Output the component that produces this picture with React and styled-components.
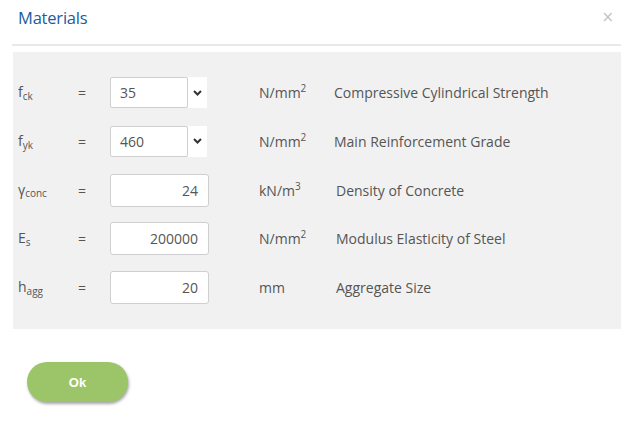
import React from "react";
import styled, { createGlobalStyle } from "styled-components";

const Global = createGlobalStyle`
  html, body { margin: 0; padding: 0; background: #fff; }
  body { font-family: "Open Sans", "Noto Sans", sans-serif; color: #555; }
`;

const Modal = styled.div`
  width: 634px;
  height: 427px;
  box-sizing: border-box;
  padding: 0 13px 0 12px;
  display: flex;
  flex-direction: column;
`;

const Header = styled.div`
  height: 46px;
  display: flex;
  align-items: center;
  justify-content: space-between;
  padding: 0 7px 9px 6px;
  box-sizing: border-box;
  border-bottom: 2px solid #e9e9e9;
`;

const Title = styled.h4`
  margin: 0;
  font-size: 16.5px;
  font-weight: 400;
  color: #1b5c9e;
  letter-spacing: -0.2px;
`;

const Close = styled.span`
  font-family: "DejaVu Sans", sans-serif;
  font-size: 15px;
  color: #c4c4c4;
  line-height: 1;
`;

const Panel = styled.div`
  margin: 6px 0 0 1px;
  background: #f1f1f1;
  padding: 24px 0 25px 5px;
  display: grid;
  grid-template-columns: 60px 32px 149px 75px 1fr;
  grid-auto-rows: 33px;
  row-gap: 15.75px;
  align-items: center;
  font-size: 14px;
  color: #555;
`;

const Label = styled.div`
  white-space: nowrap;
  sub {
    font-size: 10px;
    vertical-align: ${(p) => (p.$low ? "-2px" : "-3px")};
  }
`;

const Eq = styled.div``;

const InputBox = styled.div`
  width: 99px;
  height: 33px;
  box-sizing: border-box;
  background: #fff;
  border: 1px solid #cfcfcf;
  border-radius: 3px;
  display: flex;
  align-items: center;
  justify-content: ${(p) => (p.$left ? "flex-start" : "flex-end")};
  padding: 0 10px;
  font-size: 14px;
  color: #555;
`;

const SelectWrap = styled.div`
  display: flex;
  height: 31px;
  width: 97px;
`;

const SelectField = styled(InputBox)`
  width: 78px;
  height: 31px;
  border-radius: 2px;
  padding: 0 9px;
`;

const Arrow = styled.div`
  width: 19px;
  background: #fff;
  display: flex;
  align-items: center;
  justify-content: center;
`;

const Unit = styled.div`
  white-space: nowrap;
  sup {
    font-size: 10px;
    vertical-align: 6px;
    line-height: 0;
  }
`;

const Desc = styled.div`
  white-space: nowrap;
  padding-left: ${(p) => (p.$shift ? "2px" : "0")};
`;

const Footer = styled.div`
  padding: 33px 0 0 15px;
`;

const OkButton = styled.button`
  width: 101px;
  height: 40px;
  border: none;
  border-radius: 20px;
  background: #9cc56a;
  color: #fff;
  font-family: "Liberation Sans", Arial, sans-serif;
  font-weight: 700;
  font-size: 13px;
  box-shadow: 1px 2px 3px rgba(0, 0, 0, 0.35);
  cursor: pointer;
`;

const Chevron = () => (
  <svg width="9" height="6" viewBox="0 0 9 6">
    <path d="M1 1 L4.5 4.5 L8 1" fill="none" stroke="#333" strokeWidth="2" />
  </svg>
);

const rows = [
  { sym: "f", sub: "ck", select: "35", unit: "N/mm", sup: "2", desc: "Compressive Cylindrical Strength" },
  { sym: "f", sub: "yk", select: "460", unit: "N/mm", sup: "2", desc: "Main Reinforcement Grade" },
  { sym: "γ", sub: "conc", value: "24", unit: "kN/m", sup: "3", desc: "Density of Concrete", shift: true, low: true },
  { sym: "E", sub: "s", value: "200000", unit: "N/mm", sup: "2", desc: "Modulus Elasticity of Steel", shift: true },
  { sym: "h", sub: "agg", value: "20", unit: "mm", desc: "Aggregate Size", shift: true },
];

export default function App() {
  return (
    <>
      <Global />
      <Modal>
        <Header>
          <Title>Materials</Title>
          <Close>×</Close>
        </Header>
        <Panel>
          {rows.map((r) => (
            <React.Fragment key={r.desc}>
              <Label $low={r.low}>
                {r.sym}
                <sub>{r.sub}</sub>
              </Label>
              <Eq>=</Eq>
              <div>
                {r.select ? (
                  <SelectWrap>
                    <SelectField $left>{r.select}</SelectField>
                    <Arrow>
                      <Chevron />
                    </Arrow>
                  </SelectWrap>
                ) : (
                  <InputBox>{r.value}</InputBox>
                )}
              </div>
              <Unit>
                {r.unit}
                {r.sup && <sup>{r.sup}</sup>}
              </Unit>
              <Desc $shift={r.shift}>{r.desc}</Desc>
            </React.Fragment>
          ))}
        </Panel>
        <Footer>
          <OkButton>Ok</OkButton>
        </Footer>
      </Modal>
    </>
  );
}
